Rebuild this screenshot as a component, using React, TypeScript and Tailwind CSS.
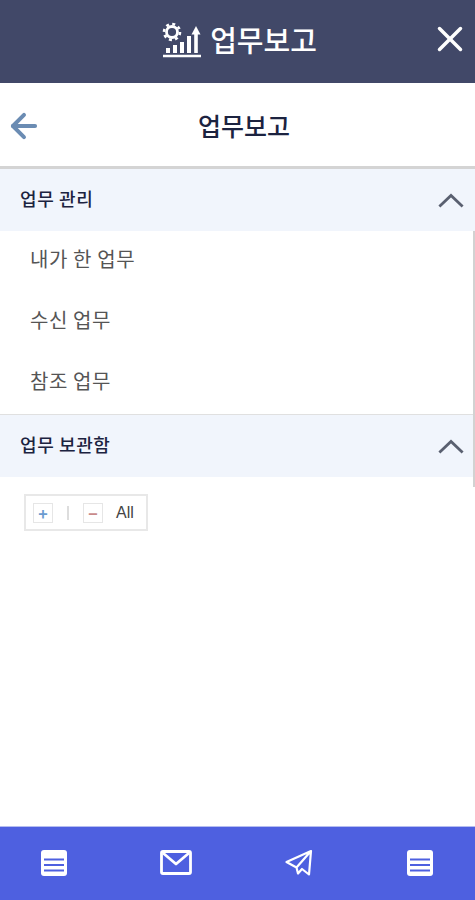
import { X, ArrowLeft } from "lucide-react";

const FONT = "font-['Noto_Sans_CJK_KR','Liberation_Sans',sans-serif]";

function ReportIcon() {
  return (
    <svg viewBox="0 0 40 36" className="w-10 h-9" fill="none" stroke="white">
      <circle cx="10" cy="10" r="5.5" strokeWidth="2.8" />
      <circle cx="10" cy="10" r="8" strokeWidth="2.6" strokeDasharray="3 3.28" />
      <path d="M1 34h38" strokeWidth="2.4" />
      <path d="M4 26h4v5H4zM11 23h4v8h-4zM18 20h4v11h-4zM25 14h4v17h-4z" fill="white" stroke="none" />
      <path d="M32.2 12h3.6v19h-3.6z" fill="white" stroke="none" />
      <path d="M29.5 12.5L34 4l4.5 8.5z" fill="white" stroke="none" />
    </svg>
  );
}

function ListIcon() {
  return (
    <svg viewBox="0 0 26 26" className="w-[26px] h-[26px]">
      <rect x="0" y="0" width="26" height="26" rx="3" fill="white" />
      <path d="M3 9.5h20M3 15h20M3 20.5h20" stroke="#4e60e0" strokeWidth="2.2" />
    </svg>
  );
}

function Chevron() {
  return (
    <svg viewBox="0 0 28 16" className="w-[26px] h-[15px]" fill="none" stroke="#5a6070" strokeWidth="3">
      <path d="M1.5 14.5L14 2.5l12.5 12" />
    </svg>
  );
}

function Section({ title }: { title: string }) {
  return (
    <div className="h-[62px] bg-[#f1f5fc] flex items-center justify-between pl-5 pr-[11px]">
      <span className="text-[18px] tracking-[0.6px] font-medium text-[#1c2340] pb-[4px]">{title}</span>
      <Chevron />
    </div>
  );
}

export default function App() {
  const items = ["내가 한 업무", "수신 업무", "참조 업무"];
  return (
    <div className={`${FONT} relative w-[475px] h-[900px] flex flex-col bg-white overflow-hidden`}>
      <header className="h-[83px] bg-[#414868] flex items-center justify-center relative">
        <div className="flex items-center gap-[8px] pl-[4px] pb-[3px]">
          <ReportIcon />
          <span className="text-[29px] font-medium text-white">업무보고</span>
        </div>
        <X className="absolute right-[4px] top-[18px] w-[42px] h-[42px] text-white" strokeWidth={2} />
      </header>
      <div className="h-[86px] flex items-center justify-center relative border-b-[3px] border-[#d4d4d4]">
        <ArrowLeft className="absolute left-[5px] top-[24px] w-[38px] h-[38px] text-[#6b8cb3]" strokeWidth={2.5} />
        <span className="text-[25px] font-medium text-[#1c2340] pl-[13px] pt-[2px]">업무보고</span>
      </div>
      <Section title="업무 관리" />
      <ul className="flex flex-col">
        {items.map((item) => (
          <li key={item} className="h-[61px] pl-[30px] pb-[5px] flex items-center text-[20px] tracking-[0.6px] text-[#555]">
            {item}
          </li>
        ))}
      </ul>
      <div className="border-t border-[#e0e0e0]">
        <Section title="업무 보관함" />
      </div>
      <div className="pl-6 pt-[17px] flex-1">
        <div className="w-[124px] h-[37px] border-2 border-[#e8e8e8] flex items-center pl-[7px] text-[16px] text-[#444]">
          <span className="w-5 h-5 border border-[#e6e6e6] flex items-center justify-center text-[#6b9bd0] font-bold">+</span>
          <span className="w-[2px] h-[14px] bg-[#ddd] ml-[14px] mr-[14px]" />
          <span className="w-5 h-5 border border-[#e6e6e6] flex items-center justify-center text-[#c98a8a] font-bold">−</span>
          <span className="ml-[13px] font-['Liberation_Sans',sans-serif]">All</span>
        </div>
      </div>
      <nav className="h-[74px] bg-[#4e60e0] border-t border-[#b5bdf0] flex items-center justify-between pl-[41px] pr-[42px] pb-[2px]">
        <ListIcon />
        <svg viewBox="0 0 32 26" className="w-[32px] h-[26px]" fill="none" stroke="white" strokeWidth="2.8" strokeLinejoin="round">
          <rect x="1.5" y="1.5" width="29" height="22" rx="1.5" />
          <path d="M3 3l13 11L29 3" />
        </svg>
        <svg viewBox="0 0 28 26" className="w-[28px] h-[26px] -translate-x-px" fill="none" stroke="white" strokeWidth="2.2" strokeLinejoin="round">
          <path d="M26 1L1.5 12l10 5.5L26 1l-2 23.5-7-5.5-4 4.5-1.5-6" />
        </svg>
        <ListIcon />
      </nav>
      <div className="absolute right-0 top-[231px] h-[256px] w-[2px] bg-[#d2d2d2]" />
    </div>
  );
}
